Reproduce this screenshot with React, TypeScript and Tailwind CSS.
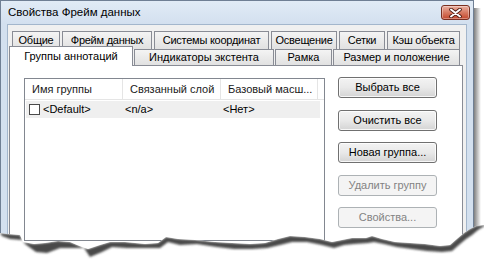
import React from "react";

const row1 = [
  { label: "Общие", cls: "w-[48px]" },
  { label: "Фрейм данных", cls: "w-[90px]" },
  { label: "Системы координат", cls: "w-[115px]" },
  { label: "Освещение", cls: "w-[66px]" },
  { label: "Сетки", cls: "w-[46px]" },
  { label: "Кэш объекта", cls: "w-[73px]" },
];

const row2 = [
  { label: "Индикаторы экстента", cls: "w-[140px]" },
  { label: "Рамка", cls: "w-[57px]" },
  { label: "Размер и положение", cls: "w-[127px]" },
];

const buttons = [
  { label: "Выбрать все", disabled: false },
  { label: "Очистить все", disabled: false },
  { label: "Новая группа...", disabled: false },
  { label: "Удалить группу", disabled: true },
  { label: "Свойства...", disabled: true },
];

// torn edge: [x, y, shadow thickness]
const torn: [number, number, number][] = [
  [0, 233, 3], [8, 234, 5], [20, 235, 5], [23, 242, 2], [34, 244, 8], [45, 243, 10],
  [58, 241, 7], [70, 242, 6], [77, 245, 3], [82, 247, 1], [88, 249, 8], [100, 245, 7],
  [110, 242, 5], [125, 242, 6], [145, 244, 4], [158, 243, 5], [166, 237, 5], [178, 239, 6],
  [195, 240, 4], [215, 242, 5], [232, 243, 6], [250, 244, 5], [265, 243, 5], [278, 239, 6],
  [290, 236, 6], [305, 237, 5], [320, 239, 6], [332, 242, 6], [342, 240, 5], [352, 238, 6],
  [366, 238, 5], [372, 236, 6], [382, 239, 5], [395, 242, 5], [410, 243, 6], [425, 244, 7],
  [440, 246, 6], [450, 245, 6], [458, 238, 6], [464, 233, 6], [470, 229, 6], [476, 226, 4],
  [484, 225, 0],
];

const line = torn.map(([x, y]) => `${x},${y}`).join(" L ");
const coverPath = `M ${line} L 484,263 L 0,263 Z`;
const lower = [...torn]
  .reverse()
  .map(([x, y, t]) => `${x + 2},${y + t}`)
  .join(" L ");
const shadowPath = `M ${line} L ${lower} Z`;

function CloseButton() {
  return (
    <div className="mt-[4px] mr-[3px] h-[15px] w-[29px] rounded-[3px] border border-[#7a2f20] bg-linear-to-b from-[#eab0a2] via-[#d77a62] to-[#c2452a] shadow-[inset_0_0_0_1px_rgba(255,255,255,0.35)] flex items-center justify-center">
      <svg width="13" height="10" viewBox="0 0 13 10">
        <path d="M2 1.5 L11 8.5 M11 1.5 L2 8.5" stroke="#4a1a10" strokeWidth="3.6" strokeLinecap="round" />
        <path d="M2 1.5 L11 8.5 M11 1.5 L2 8.5" stroke="#ffffff" strokeWidth="2" strokeLinecap="round" />
      </svg>
    </div>
  );
}

export default function App() {
  return (
    <div className="relative h-[263px] w-[484px] overflow-hidden bg-white font-['Liberation_Sans',Arial,sans-serif] text-[11px] text-black">
      <div className="flex h-[263px] w-[474px] flex-col border border-[#6f7f94] bg-[#d3e0ef]">
        <div className="flex h-[23px] items-start justify-between bg-linear-to-b from-[#e1ebf6] to-[#d3e0ef]">
          <span className="pl-[7px] pt-[4px] text-[11.5px] leading-[14px] text-black">Свойства Фрейм данных</span>
          <CloseButton />
        </div>
        <div className="mx-[6px] flex flex-1 flex-col border border-[#a3b6cc] bg-[#f0f0f0] pt-[6px]">
          <div className="ml-[1px] flex w-[454px] flex-1 flex-col">
            <div className="flex h-[18px] gap-[2px] pl-[3px]">
              {row1.map((t) => (
                <div
                  key={t.label}
                  className={`${t.cls} flex h-[18px] items-start justify-center whitespace-nowrap border border-b-0 border-[#898c95] bg-linear-to-b from-[#f4f4f4] to-[#e1e1e1] pt-[1px] leading-[14px] tracking-[-0.25px]`}
                >
                  {t.label}
                </div>
              ))}
            </div>
            <div className="flex h-[16px] items-end gap-[1px]">
              <div className="relative z-10 -mb-[1px] flex h-[20px] w-[124px] items-start justify-center border border-b-0 border-[#898c95] bg-white pt-[2px] leading-[14px]">
                Группы аннотаций
              </div>
              {row2.map((t) => (
                <div
                  key={t.label}
                  className={`${t.cls} flex h-[16px] items-start justify-center whitespace-nowrap border border-b-0 border-[#898c95] bg-linear-to-b from-[#f4f4f4] to-[#e1e1e1] pt-[1px] leading-[13px]`}
                >
                  {t.label}
                </div>
              ))}
            </div>
            <div className="flex flex-1 items-start border border-[#898c95] bg-white pl-[14px] pt-[12px]">
              <div className="flex h-[163px] w-[301px] flex-col border border-[#828790] bg-white">
                <div className="flex h-[21px] border-b border-[#e5e5e5]">
                  <div className="flex w-[98px] items-center border-r border-[#e5e5e5] pl-[7px] text-[#1a1a1a]">Имя группы</div>
                  <div className="flex w-[98px] items-center border-r border-[#e5e5e5] pl-[7px] text-[#1a1a1a]">Связанный слой</div>
                  <div className="flex w-[97px] items-center border-r border-[#e5e5e5] pl-[7px] text-[#1a1a1a]">Базовый масш...</div>
                </div>
                <div className="ml-[1px] mt-[1px] flex h-[17px] w-[294px] items-center bg-[#efefef]">
                  <div className="flex w-[97px] items-center">
                    <div className="ml-[3px] h-[11px] w-[11px] border border-[#4a4a4a] bg-white" />
                    <span className="ml-[3px]">&lt;Default&gt;</span>
                  </div>
                  <div className="w-[98px] pl-[2px]">&lt;n/a&gt;</div>
                  <div className="pl-[2px]">&lt;Нет&gt;</div>
                </div>
              </div>
              <div className="-mt-[1px] ml-[13px] flex flex-col gap-[11.5px]">
                {buttons.map((b) =>
                  b.disabled ? (
                    <div
                      key={b.label}
                      className="flex h-[21px] w-[99px] items-center justify-center rounded-[3px] border border-[#adb2b5] bg-[#f4f4f4] text-[#838383]"
                    >
                      {b.label}
                    </div>
                  ) : (
                    <div
                      key={b.label}
                      className="flex h-[21px] w-[99px] items-center justify-center rounded-[3px] border border-[#707070] bg-linear-to-b from-[#f3f3f3] via-[#e9e9e9] to-[#d4d4d4] shadow-[inset_0_0_0_1px_rgba(255,255,255,0.8)]"
                    >
                      {b.label}
                    </div>
                  )
                )}
              </div>
            </div>
          </div>
        </div>
      </div>
      <svg className="pointer-events-none absolute left-0 top-0" width="484" height="263">
        <defs>
          <linearGradient id="rs" x1="0" x2="1" y1="0" y2="0">
            <stop offset="0" stopColor="#000" stopOpacity="0.5" />
            <stop offset="1" stopColor="#000" stopOpacity="0" />
          </linearGradient>
          <filter id="blur" x="-10%" y="-50%" width="120%" height="200%">
            <feGaussianBlur stdDeviation="1.1" />
          </filter>
          <clipPath id="below">
            <path d={coverPath} />
          </clipPath>
        </defs>
        <rect x="474" y="8" width="7" height="250" fill="url(#rs)" />
        <path d={coverPath} fill="#ffffff" />
        <g clipPath="url(#below)">
          <path d={shadowPath} fill="#4a4a4a" filter="url(#blur)" />
        </g>
      </svg>
    </div>
  );
}
